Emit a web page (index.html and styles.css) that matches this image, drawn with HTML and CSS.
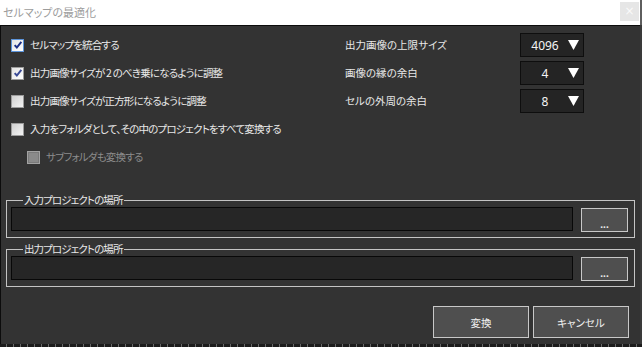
FILE: index.html
```html
<!DOCTYPE html>
<html lang="ja">
<head>
<meta charset="utf-8">
<title>セルマップの最適化</title>
<link rel="stylesheet" href="styles.css">
</head>
<body>
<div class="screen">
  <div class="row">
    <div class="window">
      <div class="titlebar">
        <span class="title">セルマップの最適化</span>
        <span class="close">×</span>
      </div>
      <div class="dialog">
        <div class="options">
          <div class="checks">
            <label class="check">
              <span class="box checked focus"><svg viewBox="0 0 12 12" width="10" height="10"><path d="M2 6.2 L4.6 9 L10 2.2" fill="none" stroke="#1d2f86" stroke-width="2.4"/></svg></span>
              <span class="ctext">セルマップを統合する</span>
            </label>
            <label class="check">
              <span class="box checked"><svg viewBox="0 0 12 12" width="10" height="10"><path d="M2 6.2 L4.6 9 L10 2.2" fill="none" stroke="#3a4a96" stroke-width="2.4"/></svg></span>
              <span class="ctext">出力画像サイズが 2 のべき乗になるように調整</span>
            </label>
            <label class="check">
              <span class="box"></span>
              <span class="ctext">出力画像サイズが正方形になるように調整</span>
            </label>
            <label class="check">
              <span class="box"></span>
              <span class="ctext">入力をフォルダとして、その中のプロジェクトをすべて変換する</span>
            </label>
            <label class="check sub disabled">
              <span class="box"></span>
              <span class="ctext">サブフォルダも変換する</span>
            </label>
          </div>
          <div class="settings">
            <span class="slabel">出力画像の上限サイズ</span>
            <div class="select"><span class="val">4096</span><svg class="arrow" viewBox="0 0 11 10" width="11" height="10"><path d="M0 0 H11 L5.5 10 Z" fill="#fff"/></svg></div>
            <span class="slabel">画像の縁の余白</span>
            <div class="select"><span class="val">4</span><svg class="arrow" viewBox="0 0 11 10" width="11" height="10"><path d="M0 0 H11 L5.5 10 Z" fill="#fff"/></svg></div>
            <span class="slabel">セルの外周の余白</span>
            <div class="select"><span class="val">8</span><svg class="arrow" viewBox="0 0 11 10" width="11" height="10"><path d="M0 0 H11 L5.5 10 Z" fill="#fff"/></svg></div>
          </div>
        </div>

        <fieldset class="group first">
          <legend>入力プロジェクトの場所</legend>
          <div class="pathrow">
            <div class="field"></div>
            <button class="browse">...</button>
          </div>
        </fieldset>
        <fieldset class="group">
          <legend>出力プロジェクトの場所</legend>
          <div class="pathrow">
            <div class="field"></div>
            <button class="browse">...</button>
          </div>
        </fieldset>

        <div class="actions">
          <button class="btn">変換</button>
          <button class="btn">キャンセル</button>
        </div>
      </div>
    </div>
    <div class="edge"></div>
  </div>
  <div class="floor"></div>
</div>
</body>
</html>
```
FILE: styles.css
```css
* { box-sizing: border-box; }
html, body {
  margin: 0;
  padding: 0;
}
body {
  width: 642px;
  height: 347px;
  overflow: hidden;
  background: #3d3d3d;
  font-family: "Noto Sans CJK JP", "Noto Sans", sans-serif;
  font-feature-settings: "palt";
  color: #e8e8e8;
}
.screen {
  display: flex;
  flex-direction: column;
  height: 347px;
}
.row {
  display: flex;
  height: 344px;
}
.window {
  width: 640px;
  display: flex;
  flex-direction: column;
}
.edge {
  flex: 1;
  background: linear-gradient(#5e5e5e 0 25px, #3a3a3a 25px);
}
.floor {
  flex: 1;
  background: repeating-linear-gradient(90deg, #1c1c1c 0 6px, #6a6a6a 6px 7px);
}

/* title bar */
.titlebar {
  height: 25px;
  background: #fff;
  display: flex;
  align-items: center;
  justify-content: space-between;
  padding: 0 1px 0 3px;
}
.title {
  font-size: 11px;
  color: #9c9c9c;
  line-height: 14px;
  margin-top: -1px;
}
.close {
  width: 19px;
  height: 19px;
  background: #e6e6e6;
  color: #fafafa;
  font-size: 12px;
  line-height: 18px;
  text-align: center;
  margin-top: -2px;
  font-family: "DejaVu Sans", sans-serif;
}

/* dialog body */
.dialog {
  flex: 1;
  background: #333333;
  border-top: 1px solid #0c0c0c;
  border-left: 1px solid #0c0c0c;
  display: flex;
  flex-direction: column;
  padding: 5px 0 6px 0;
}
.options {
  display: flex;
}
.checks {
  width: 344px;
  padding-left: 10px;
  display: flex;
  flex-direction: column;
}
.check {
  height: 28px;
  display: flex;
  align-items: center;
  gap: 6px;
  font-size: 10.5px;
  letter-spacing: -0.8px;
}
.check.sub { padding-left: 16px; }
.check.disabled .ctext { color: #8c8c8c; }
.box {
  width: 13px;
  height: 13px;
  border: 1px solid #9c9c9c;
  background: linear-gradient(135deg, #cfcfcf, #f4f4f4);
  display: flex;
  align-items: center;
  justify-content: center;
  flex: none;
}
.box.checked { background: linear-gradient(135deg, #e4e4e4, #ffffff); }
.box.focus { border-color: #5d95db; }
.check.disabled .box {
  background: #8a8a8a;
  border-color: #a2a2a2;
  box-shadow: inset 0 0 0 1px #7a7a7a;
}
.ctext { line-height: 14px; }

.settings {
  display: grid;
  grid-template-columns: 175px 64px;
  grid-auto-rows: 28px;
  align-items: center;
}
.slabel {
  font-size: 10.5px;
  line-height: 14px;
}
.select {
  height: 24px;
  background: #242424;
  border: 1px solid #0e0e0e;
  display: flex;
  align-items: center;
  padding: 0 4px 0 0;
}
.select .val {
  flex: 1;
  text-align: center;
  font-size: 12px;
  color: #f4f4f4;
  font-family: "Noto Sans", sans-serif;
  padding-left: 1px;
}
.arrow { margin-top: -1px; }

/* group boxes */
.group {
  margin: 22px 5px 0 5px;
  border: 1px solid #c4c4c4;
  padding: 0 6px 5px 4px;
  min-width: 0;
}
.group + .group { margin-top: 4px; }
.group legend {
  margin-left: 12px;
  padding: 0 1px;
  font-size: 10.5px;
  letter-spacing: -0.9px;
  line-height: 14px;
  color: #e8e8e8;
}
.pathrow {
  display: flex;
  gap: 8px;
  align-items: flex-start;
}
.field {
  flex: 1;
  height: 24px;
  background: #262626;
  border: 1px solid #080808;
}
.browse {
  width: 47px;
  height: 24px;
  margin-top: 1px;
  background: #4f4f4f;
  border: 1px solid #c8c8c8;
  color: #f0f0f0;
  font-size: 10px;
  font-family: "Noto Sans", sans-serif;
  font-weight: bold;
  line-height: 10px;
  padding: 8px 0 0 0;
}

/* footer */
.actions {
  margin-top: auto;
  display: flex;
  justify-content: flex-end;
  gap: 4px;
  padding-right: 11px;
}
.btn {
  width: 96px;
  height: 32px;
  background: #4f4f4f;
  border: 1px solid #c8c8c8;
  color: #f0f0f0;
  font-family: "Noto Sans CJK JP", sans-serif;
  font-feature-settings: "palt";
  font-size: 10.5px;
  padding: 0;
}
```
